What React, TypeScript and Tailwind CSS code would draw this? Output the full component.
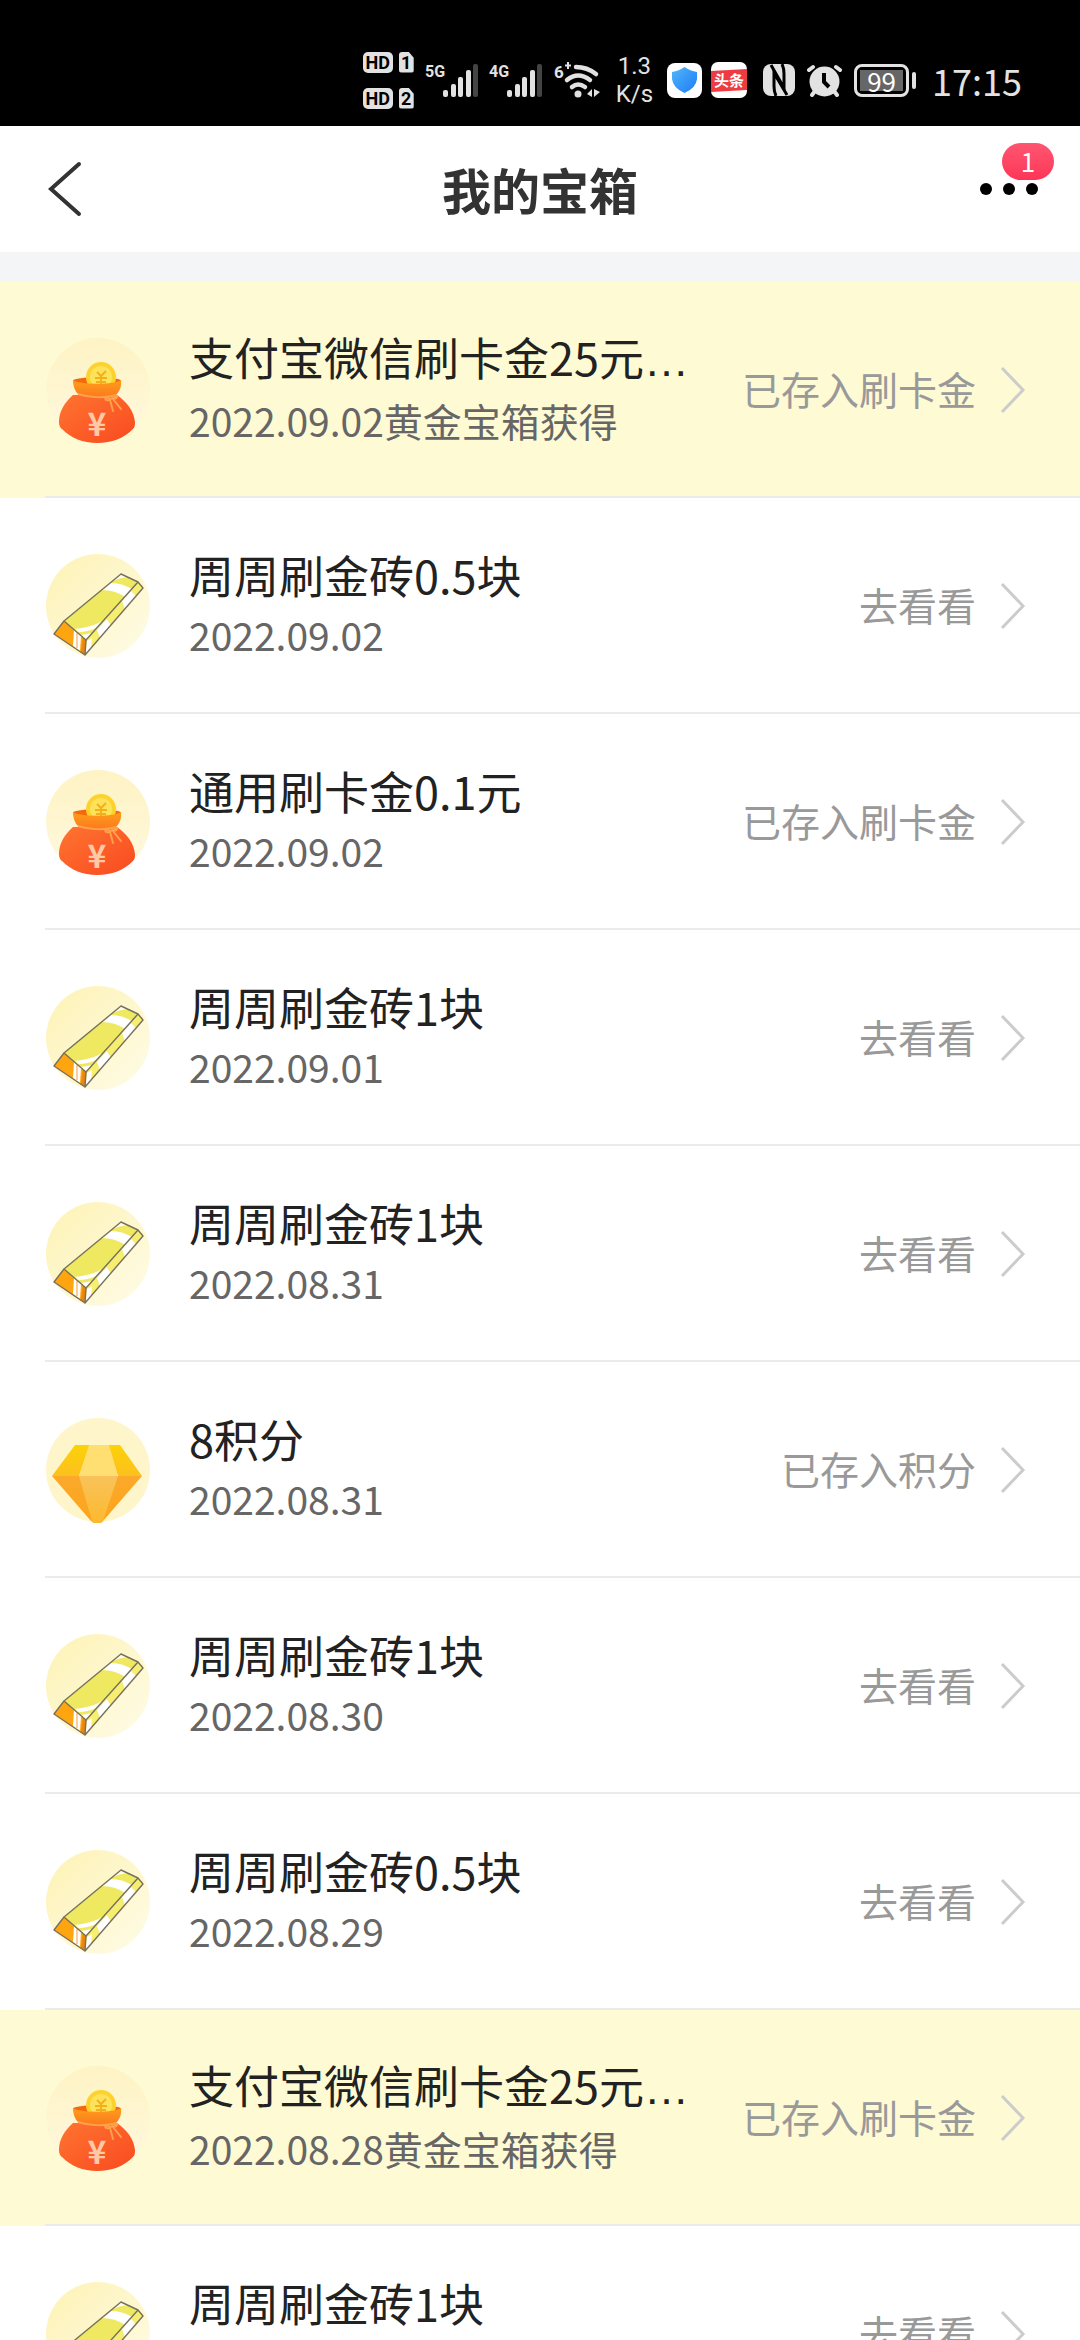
import React from "react";

type Kind = "bag" | "brick" | "gem";

type Reward = {
  kind: Kind;
  title: string;
  cut?: boolean;
  date: string;
  status: string;
  highlight?: boolean;
};

const rewards: Reward[] = [
  { kind: "bag", title: "支付宝微信刷卡金25元", cut: true, date: "2022.09.02黄金宝箱获得", status: "已存入刷卡金", highlight: true },
  { kind: "brick", title: "周周刷金砖0.5块", date: "2022.09.02", status: "去看看" },
  { kind: "bag", title: "通用刷卡金0.1元", date: "2022.09.02", status: "已存入刷卡金" },
  { kind: "brick", title: "周周刷金砖1块", date: "2022.09.01", status: "去看看" },
  { kind: "brick", title: "周周刷金砖1块", date: "2022.08.31", status: "去看看" },
  { kind: "gem", title: "8积分", date: "2022.08.31", status: "已存入积分" },
  { kind: "brick", title: "周周刷金砖1块", date: "2022.08.30", status: "去看看" },
  { kind: "brick", title: "周周刷金砖0.5块", date: "2022.08.29", status: "去看看" },
  { kind: "bag", title: "支付宝微信刷卡金25元", cut: true, date: "2022.08.28黄金宝箱获得", status: "已存入刷卡金", highlight: true },
  { kind: "brick", title: "周周刷金砖1块", date: "2022.08.28", status: "去看看" },
];

function BagIcon() {
  return (
    <>
      <path d="M28 57 C20 64 14 73 14 84 C14 87 15 90 17 91 C26 100 38 105 52 105 C67 105 79 100 88 91 C90 89 90 87 90 84 C89 73 82 64 72 57 Z" fill="url(#bagBody)" />
      <path d="M28 43 C28 38 76 38 76 43 C76 47 66 51 52 51 C38 51 28 47 28 43 Z" fill="#f26a10" />
      <circle cx="56" cy="39" r="15" fill="#fdd22f" />
      <circle cx="56" cy="39" r="11" fill="#fee259" />
      <path d="M52 34 L56 38 L61 33 M50 40 H62 M56 38 V46 M51 44 H61" fill="none" stroke="#f3b01c" strokeWidth="2" />
      <path d="M28 42 C34 47 70 47 76 42 C77 49 74 54 71 57 C62 60 42 60 33 56 C30 53 28 48 28 42 Z" fill="url(#bagNeck)" />
      <path d="M33 56 C42 59 58 61 71 57" fill="none" stroke="#ffa04a" strokeWidth="2" />
      <path d="M64 60 C57 58 61 66 67 60 C72 56 75 60 68 61 L76 71 M65 62 L68 73" fill="none" stroke="#ffa04a" strokeWidth="2" strokeLinecap="round" />
      <text x="52" y="98" textAnchor="middle" fontSize="32" fontWeight="700" fill="#ffc9a8" fontFamily="'Noto Sans CJK SC', sans-serif">¥</text>
    </>
  );
}

function BrickIcon() {
  return (
    <>
      <path d="M76 20 L93 28 L41 86 L19 67 Z" fill="#efe962" />
      <path d="M76 20 L83 23 Q73 24 66 28 Z" fill="#fffef0" />
      <path d="M66 29 L57 36 Q70 36 80 43 L87 35 Q77 29 66 29 Z" fill="#fff" />
      <path d="M30 75 Q48 73 57 67 L51 74 Q43 78 33 78 Z M36 81 Q43 80 47 79 L41 86 Z" fill="#fff" />
      <path d="M93 28 L98 34 L40 101 L41 86 Z" fill="#f6ee70" />
      <path d="M86 37 L91 42 L80 55 L77 47 Z M62 65 L66 72 L55 84 L52 76 Z M42 87 L47 84 L46 94 L40 101 Z" fill="#fff" />
      <path d="M19 67 L41 86 L40 101 L9 80 Z" fill="#ffa510" />
      <path d="M29 76 L36 82 L35 97 L28 92 Z" fill="#fff" />
      <path d="M32 79 V94" stroke="#ff9b22" strokeWidth="1" />
      <path d="M38 84 L41 87 L40 101 L36 98 Z" fill="#e9860c" />
      <g fill="none" stroke="#77715f" strokeWidth="1.4" strokeLinejoin="round">
        <path d="M76 20 L93 28 L41 86 L19 67 Z" />
        <path d="M93 28 L98 34 L40 101 L41 86" />
        <path d="M19 67 L9 80 L40 101" />
      </g>
    </>
  );
}

function GemIcon() {
  return (
    <>
      <path d="M30 27 H45 L34 58 H7 Z M63 27 H75 L97 58 H73 Z" fill="url(#gemTop)" />
      <path d="M44 27 H64 L73 58 H34 Z" fill="#ffdf72" />
      <path d="M7 58 H97 L58 103 Q57 105 54 105 H50 Q48 105 46 103 Z" fill="url(#gemBottom)" />
      <path d="M34 58 H73 L58 103 Q57 105 54 105 H50 Q48 105 47 103 Z" fill="url(#gemMiddle)" />
    </>
  );
}

function RewardIcon({ kind }: { kind: Kind }) {
  return (
    <svg viewBox="0 0 105 105" className="size-[105px] shrink-0 overflow-visible">
      <circle cx="53" cy="52" r="52" fill={kind === "gem" ? "#fff5cb" : kind === "bag" ? "url(#discBag)" : "url(#disc)"} />
      {kind === "bag" && <BagIcon />}
      {kind === "brick" && <BrickIcon />}
      {kind === "gem" && <GemIcon />}
    </svg>
  );
}

// Gradients shared by every reward icon
function IconDefs() {
  return (
    <svg className="absolute size-0">
      <defs>
        <linearGradient id="disc" x1="0" y1="0" x2="1" y2="1">
          <stop offset="0" stopColor="#fdf2b4" />
          <stop offset="1" stopColor="#fffce8" />
        </linearGradient>
        <linearGradient id="discBag" x1="0" y1="0" x2="0" y2="1">
          <stop offset="0" stopColor="#fef3c4" />
          <stop offset="1" stopColor="#fff8de" />
        </linearGradient>
        <linearGradient id="bagBody" x1="0" y1="0" x2="1" y2="1">
          <stop offset="0" stopColor="#ff7430" />
          <stop offset="1" stopColor="#f94a20" />
        </linearGradient>
        <linearGradient id="bagNeck" x1="0" y1="0" x2="0" y2="1">
          <stop offset="0" stopColor="#ff9d1c" />
          <stop offset="1" stopColor="#fb7a1c" />
        </linearGradient>
        <linearGradient id="gemTop" x1="0" y1="0" x2="0" y2="1">
          <stop offset="0" stopColor="#fbd207" />
          <stop offset="1" stopColor="#fdc01f" />
        </linearGradient>
        <linearGradient id="gemBottom" x1="0" y1="0" x2="0" y2="1">
          <stop offset="0" stopColor="#fba92b" />
          <stop offset="1" stopColor="#fda41b" />
        </linearGradient>
        <linearGradient id="gemMiddle" x1="0" y1="0" x2="0" y2="1">
          <stop offset="0" stopColor="#f8c35b" />
          <stop offset="1" stopColor="#fdb92e" />
        </linearGradient>
        <linearGradient id="shield" x1="0" y1="0" x2="1" y2="1">
          <stop offset="0" stopColor="#52b5fb" />
          <stop offset="1" stopColor="#1c7df5" />
        </linearGradient>
      </defs>
    </svg>
  );
}

function SimBadge({ slot }: { slot: string }) {
  return (
    <div className="flex gap-1.5 text-[18px] leading-[21px] font-bold text-black">
      <span className="w-[30px] rounded-[5px] bg-[#e2e2e2] text-center">HD</span>
      <span className="w-[15px] rounded-[3px] bg-[#e2e2e2] text-center [clip-path:polygon(0_0,65%_0,100%_30%,100%_100%,0_100%)]">{slot}</span>
    </div>
  );
}

function Signal({ label }: { label: string }) {
  return (
    <svg viewBox="0 0 52 34" className="h-[34px] w-[52px] overflow-visible" fill="#e2e2e2">
      <text x="-1" y="14" fontSize="16" fontWeight="700" fontFamily="Roboto, sans-serif">{label}</text>
      <rect x="17" y="27" width="5" height="7" rx="2" />
      <rect x="25" y="21" width="5" height="13" rx="2" />
      <rect x="32" y="14" width="5" height="20" rx="2" />
      <rect x="40" y="7" width="5" height="27" rx="2" />
      <rect x="47" y="1" width="5" height="33" rx="2" fill="#444" />
    </svg>
  );
}

function Wifi() {
  return (
    <svg viewBox="0 0 48 36" className="h-9 w-12 overflow-visible" fill="#e2e2e2">
      <text x="0" y="16" fontSize="17" fontWeight="700" fontFamily="Roboto, sans-serif">6</text>
      <path d="M14 0 V7 M11 3.500 H17" stroke="#e2e2e2" strokeWidth="2" />
      <g fill="none" stroke="#e2e2e2" strokeWidth="4.5" strokeLinecap="round">
        <path d="M22 5 Q33 5 42 12" />
        <path d="M13 18 Q24 9 36 18" />
        <path d="M18 25 Q24 20 31 25" />
      </g>
      <circle cx="24" cy="32" r="3.5" />
      <path d="M33 32 L38 27 V35 Z M40 27 V35 L46 30 Z" />
    </svg>
  );
}

function StatusBar() {
  return (
    <div className="flex h-[126px] shrink-0 items-center justify-end gap-3 bg-black pt-[34px] pr-[58px] font-[Roboto,'Noto_Sans_CJK_SC',sans-serif] text-[#e2e2e2]">
      <div className="flex flex-col gap-[15px]">
        <SimBadge slot="1" />
        <SimBadge slot="2" />
      </div>
      <Signal label="5G" />
      <Signal label="4G" />
      <Wifi />
      <div className="mx-0.5 text-center text-2xl leading-7">
        1.3
        <br />
        K/s
      </div>
      <div className="mr-1 flex gap-2">
        <svg viewBox="0 0 36 36" className="size-9">
          <rect width="35" height="35" y="1" rx="8" fill="#fff" />
          <path d="M17.500 5 Q23 9 30 10 V17 Q29 26 17.500 31 Q6 26 5 17 V10 Q12 9 17.500 5 Z" fill="url(#shield)" />
        </svg>
        <svg viewBox="0 0 36 36" className="size-9">
          <rect width="36" height="36" rx="7" fill="#fff" />
          <path d="M0 9 L36 7 V28 L0 30 Z" fill="#ee3b41" />
          <text x="18" y="24" textAnchor="middle" fontSize="15" fontWeight="700" fill="#fff" fontFamily="'Noto Sans CJK SC', sans-serif">头条</text>
        </svg>
      </div>
      <svg viewBox="0 0 32 32" className="size-8">
        <rect width="32" height="32" rx="8" fill="#e2e2e2" />
        <g fill="none" stroke="#000" strokeWidth="3">
          <path d="M8 1 L21 24 V10 Q21 4 19 0" />
          <path d="M24 31 L11 9 V22 Q11 28 13 32" />
        </g>
      </svg>
      <svg viewBox="0 0 35 33" className="h-[33px] w-[35px]">
        <g fill="none" stroke="#e2e2e2" strokeWidth="4" strokeLinecap="round">
          <path d="M2 6 L6 3 M29 3 L33 6" />
          <path d="M8 27 L5 31 M27 27 L30 31" />
        </g>
        <circle cx="17.500" cy="17.500" r="15" fill="#e2e2e2" />
        <path d="M17 9 V18 L22 23" fill="none" stroke="#000" strokeWidth="4" />
      </svg>
      <div className="flex items-center gap-[3px]">
        <div className="rounded-lg border-[3px] border-[#e2e2e2] p-[3px]">
          <div className="w-[43px] bg-[#666] text-center font-['Noto_Sans_CJK_SC',sans-serif] text-[26px] leading-[21px] text-white">99</div>
        </div>
        <div className="h-[17px] w-1 rounded-sm bg-[#e2e2e2]" />
      </div>
      <time className="ml-1 font-['Noto_Sans_CJK_SC',sans-serif] text-4xl">17:15</time>
    </div>
  );
}

export default function App() {
  return (
    <div className="flex h-screen flex-col overflow-hidden bg-white font-['Noto_Sans_CJK_SC',sans-serif]">
      <IconDefs />
      <StatusBar />

      <header className="grid h-[126px] shrink-0 grid-cols-3 items-center px-[42px]">
        <button aria-label="返回" className="w-[42px]">
          <svg viewBox="0 0 42 56" className="h-14 w-[42px]">
            <path d="M37 3 L9 28 L37 53" fill="none" stroke="#333" strokeWidth="4" strokeLinecap="round" />
          </svg>
        </button>
        <h1 className="text-center text-[49px] font-bold whitespace-nowrap text-[#333]">我的宝箱</h1>
        <button aria-label="更多" className="relative flex gap-[11px] justify-self-end">
          <span className="size-3 rounded-full bg-black" />
          <span className="size-3 rounded-full bg-black" />
          <span className="size-3 rounded-full bg-black" />
          <span className="absolute -top-10 -right-4 h-[37px] w-[52px] rounded-full bg-linear-to-b from-[#fe5571] to-[#fd3557] text-center text-[26px] leading-9 text-white">
            1
          </span>
        </button>
      </header>

      <ul className="flex-1 overflow-y-auto border-t-[30px] border-[#f3f5f7] [scrollbar-width:none]">
        {rewards.map((r, i) => (
          <li key={i} className={r.highlight ? "bg-[#fefad3]" : "bg-white"}>
            <a href="#" className="ml-[45px] flex h-[216px] items-center border-b-2 border-[#ebebeb] pt-0.5 pr-[54px]">
              <RewardIcon kind={r.kind} />
              <div className="ml-[39px] min-w-0 flex-1 pb-2">
                <p className="text-[45px] leading-[64px] whitespace-nowrap text-[#222]">
                  {r.title}
                  {r.cut && <span className="font-['Liberation_Sans',sans-serif]">…</span>}
                </p>
                <p className="text-[39px] leading-[54px] whitespace-nowrap text-[#666]">{r.date}</p>
              </div>
              <span className="pb-1 text-[39px] whitespace-nowrap text-[#999]">{r.status}</span>
              <svg viewBox="0 0 26 48" className="ml-6 h-12 w-[26px]">
                <path d="M2 2 L23 24 L2 46" fill="none" stroke="#ccc" strokeWidth="3" />
              </svg>
            </a>
          </li>
        ))}
      </ul>
    </div>
  );
}
